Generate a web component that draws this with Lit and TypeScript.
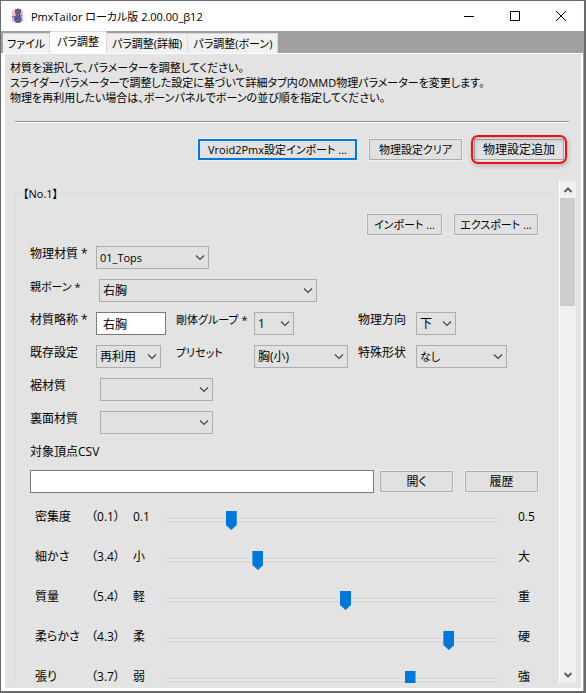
import { LitElement, html, css } from "lit";
import { customElement, property } from "lit/decorators.js";

interface SliderRow {
  id: string;
  name: string;
  value: string;
  low: string;
  high: string;
  pos: number;
}

const SLIDERS: SliderRow[] = [
  { id: "density", name: "密集度", value: "0.1", low: "0.1", high: "0.5", pos: 183 },
  { id: "fineness", name: "細かさ", value: "3.4", low: "小", high: "大", pos: 266 },
  { id: "mass", name: "質量", value: "5.4", low: "軽", high: "重", pos: 539 },
  { id: "softness", name: "柔らかさ", value: "4.3", low: "柔", high: "硬", pos: 861 },
  { id: "tension", name: "張り", value: "3.7", low: "弱", high: "強", pos: 740 },
];

@customElement("combo-box")
class ComboBox extends LitElement {
  @property() value = "";
  @property() label = "";

  static styles = css`
    :host { display: block; position: relative; height: 23px; }
    select {
      appearance: none;
      box-sizing: border-box;
      width: 100%;
      height: 23px;
      margin: 0;
      padding: 0 20px 0 3px;
      border: 1px solid #adadad;
      border-radius: 0;
      background: #e1e1e1;
      color: #000;
      font: inherit;
      font-feature-settings: inherit;
    }
    svg { position: absolute; right: 4px; top: 8px; pointer-events: none; }
  `;

  render() {
    return html`<select aria-label=${this.label}><option>${this.value}</option></select>
      <svg width="10" height="7" viewBox="0 0 10 7"><path d="M1 1.5L5 5.5L9 1.5" fill="none" stroke="#444" stroke-width="1.2"/></svg>`;
  }
}

@customElement("app-root")
class AppRoot extends LitElement {
  static styles = css`
    :host {
      display: block;
      font: 12px/15px "Open Sans", "Noto Sans CJK JP", sans-serif;
      font-feature-settings: "palt";
      color: #000;
    }
    * { box-sizing: border-box; }
    button, input { font: inherit; font-feature-settings: inherit; color: inherit; margin: 0; }
    .window {
      display: flex;
      flex-direction: column;
      height: 100vh;
      border: 1px solid #6b696b;
      border-right-width: 2px;
      border-bottom-width: 2px;
      background: #a0a0a0;
      overflow: hidden;
    }
    .titlebar {
      display: flex;
      align-items: center;
      flex: none;
      height: 30px;
      padding-left: 9px;
      background: #fff;
    }
    .title { flex: 1; margin: 0 0 0 5px; font-size: 11px; font-weight: 400; white-space: nowrap; }
    .caption { display: flex; align-items: center; justify-content: center; width: 46px; height: 28px; padding: 0; border: 0; background: none; }
    .tabs { display: flex; align-items: flex-end; flex: none; height: 22px; padding-left: 2px; }
    .tab { height: 20px; padding: 0 4px; border: 1px solid #d9d9d9; border-width: 1px 1px 0 0; background: #f0f0f0; font-size: 11px; white-space: nowrap; }
    .tab.active { height: 22px; padding: 0 7px 2px; background: #fff; }
    .tab.wide { padding: 0 5px; }
    .page {
      display: flex;
      flex-direction: column;
      flex: 1;
      min-height: 0;
      margin-right: 1px;
      padding: 0 5px 5px;
      border: solid #fff;
      border-width: 1px 2px 3px 4px;
      background: #e3e3e3;
    }
    .intro { flex: none; margin: 6px 0 0; font-size: 11px; white-space: nowrap; }
    .rule { flex: none; height: 2px; margin: 16px 7px 0 5px; border: 0; border-top: 1px solid #8e8e8e; border-bottom: 1px solid #fff; }
    .actions { display: flex; justify-content: flex-end; flex: none; gap: 12px; padding: 16px 12px 0 0; }
    .btn { height: 21px; padding: 0; border: 1px solid #adadad; outline: 1px solid #eee; background: #e1e1e1; white-space: nowrap; }
    .main-btn { width: 93px; }
    .primary { width: 159px; border: 2px solid #0078d7; }
    .marked { position: relative; width: 90px; }
    .marked::after {
      content: "";
      position: absolute;
      inset: -5px -4px;
      border: 2px solid #f01018;
      border-radius: 7px;
      box-shadow: 1px 2px 5px #0003, inset 1px 2px 5px #0003;
    }
    .scroller { display: flex; flex: 1; min-height: 0; margin-top: 21px; padding-left: 4px; }
    .view { flex: 1; min-width: 0; overflow: hidden; padding-right: 5px; }
    .group { height: 640px; margin: 5px 0 0 1px; padding: 0 14px; border: 1px solid #dcdcdc; }
    legend { padding: 0 1px; margin-left: -8px; }
    .scrollbar { display: flex; flex-direction: column; align-items: stretch; flex: none; width: 17px; border-left: 1px solid #fff; background: #f0f0f0; }
    .arrow { display: flex; align-items: center; justify-content: center; flex: none; height: 17px; padding: 0; border: 0; background: none; }
    .thumb { height: 108px; margin-right: 1px; background: #cdcdcd; }
    .space { flex: 1; }
    .row { display: flex; align-items: flex-start; height: 33px; white-space: nowrap; }
    .io { justify-content: flex-end; gap: 12px; padding: 13px 1px 0 0; height: 45px; }
    .io .import { width: 75px; }
    .io .export { width: 84px; }
    .lbl { width: 66px; flex: none; }
    .lbl.mid { width: 78px; }
    .lbl.end { width: 58px; }
    .cell { display: flex; flex: none; }
    .cell.first { width: 146px; }
    .cell.second { width: 182px; }
    .small { font-size: 11px; }
    .w40 { width: 40px; }
    .w65 { width: 65px; }
    .w91 { width: 91px; }
    .w94 { width: 94px; }
    .w113 { width: 113px; }
    .w218 { width: 218px; }
    .in3 { margin-left: 3px; }
    .in4 { margin-left: 4px; }
    .field { height: 23px; border: 1px solid #7a7a7a; border-radius: 0; background: #fff; padding: 0 6px; }
    .short { width: 70px; }
    .csv { gap: 6px; height: 34px; padding-right: 1px; }
    .csv .field { flex: 1; min-width: 0; }
    .csv .btn { width: 73px; margin-top: 1px; }
    .csv .btn + .btn { margin-left: 6px; }
    .csv-label { display: block; height: 26px; }
    .slide { display: flex; align-items: flex-start; height: 40px; padding: 0 1px 0 5px; white-space: nowrap; }
    .slide .name { width: 56px; padding-top: 5px; }
    .slide .value { width: 42px; padding-top: 5px; }
    .slide .low { width: 33px; padding-top: 5px; }
    .slide .high { width: 20px; padding-top: 5px; }
    .slide input { appearance: none; flex: 1; min-width: 0; height: 20px; margin: 6px 18px 0 0; background: none; }
    .slide input::-webkit-slider-runnable-track { height: 4px; border: 1px solid #d1d5d3; background: #e7eaea; }
    .slide input::-webkit-slider-thumb {
      appearance: none;
      width: 11px;
      height: 19px;
      margin-top: -8px;
      background: #0078d7;
      clip-path: polygon(0 0, 100% 0, 100% 74%, 50% 100%, 0 74%);
    }
  `;

  private slider(s: SliderRow) {
    return html`<div class="slide">
      <label class="name" for=${s.id}>${s.name}</label>
      <output class="value" for=${s.id}>（${s.value}）</output>
      <span class="low">${s.low}</span>
      <input id=${s.id} type="range" min="0" max="1000" .value=${String(s.pos)} />
      <span class="high">${s.high}</span>
    </div>`;
  }

  render() {
    return html`<main class="window">
      <header class="titlebar">
        <svg width="16" height="16" viewBox="0 0 16 16" aria-hidden="true">
          <path d="M2 2H13V14H2Z" fill="#f0b4e0"/>
          <path d="M5 1H7L8 0L9 1H11V5L10 7L11 9L12 12L10 15H6L4 12V9L6 7L5 5Z" fill="#66666c"/>
          <path d="M2 8.5L5 9.5L8 9L12 7.5M4 11.5L8 10.5L11 11" fill="none" stroke="#5448b8"/>
        </svg>
        <h1 class="title">PmxTailor ローカル版 2.00.00_β12</h1>
        <button class="caption" aria-label="最小化"><svg width="10" height="10"><path d="M0 5.5H10" stroke="#000"/></svg></button>
        <button class="caption" aria-label="最大化"><svg width="10" height="10"><path d="M.5 .5H9.5V9.5H.5Z" fill="none" stroke="#000"/></svg></button>
        <button class="caption" aria-label="閉じる"><svg width="10" height="10"><path d="M0 0L10 10M10 0L0 10" stroke="#000"/></svg></button>
      </header>
      <nav class="tabs" role="tablist">
        <button class="tab" role="tab">ファイル</button>
        <button class="tab active" role="tab" aria-selected="true">パラ調整</button>
        <button class="tab wide" role="tab">パラ調整(詳細)</button>
        <button class="tab wide" role="tab">パラ調整(ボーン)</button>
      </nav>
      <section class="page">
        <p class="intro">材質を選択して、パラメーターを調整してください。<br />スライダーパラメーターで調整した設定に基づいて詳細タブ内のMMD物理パラメーターを変更します。<br />物理を再利用したい場合は、ボーンパネルでボーンの並び順を指定してください。</p>
        <hr class="rule" />
        <div class="actions">
          <button class="btn primary small">Vroid2Pmx設定インポート ...</button>
          <button class="btn main-btn small">物理設定クリア</button>
          <button class="btn main-btn marked">物理設定追加</button>
        </div>
        <div class="scroller">
          <div class="view">
            <fieldset class="group">
              <legend class="small">【No.1】</legend>
              <div class="row io">
                <button class="btn import small">インポート ...</button>
                <button class="btn export small">エクスポート ...</button>
              </div>
              <div class="row"><span class="lbl">物理材質 *</span><combo-box class="w113 small" label="物理材質" value="01_Tops"></combo-box></div>
              <div class="row"><span class="lbl small">親ボーン *</span><combo-box class="w218 in3" label="親ボーン" value="右胸"></combo-box></div>
              <div class="row">
                <div class="cell first"><label class="lbl" for="abbr">材質略称 *</label><input class="field short" id="abbr" type="text" value="右胸" /></div>
                <div class="cell second"><span class="lbl mid small">剛体グループ *</span><combo-box class="w40" label="剛体グループ" value="1"></combo-box></div>
                <div class="cell"><span class="lbl end">物理方向</span><combo-box class="w40" label="物理方向" value="下"></combo-box></div>
              </div>
              <div class="row">
                <div class="cell first"><span class="lbl">既存設定</span><combo-box class="w65" label="既存設定" value="再利用"></combo-box></div>
                <div class="cell second"><span class="lbl mid small">プリセット</span><combo-box class="w94" label="プリセット" value="胸(小)"></combo-box></div>
                <div class="cell"><span class="lbl end">特殊形状</span><combo-box class="w91 small" label="特殊形状" value="なし"></combo-box></div>
              </div>
              <div class="row"><span class="lbl">裾材質</span><combo-box class="w113 in4" label="裾材質"></combo-box></div>
              <div class="row"><span class="lbl">裏面材質</span><combo-box class="w113 in4" label="裏面材質"></combo-box></div>
              <label class="csv-label" for="csv">対象頂点CSV</label>
              <div class="row csv"><input class="field" id="csv" type="text" /><button class="btn">開く</button><button class="btn">履歴</button></div>
              ${SLIDERS.map((s) => this.slider(s))}
            </fieldset>
          </div>
          <div class="scrollbar">
            <button class="arrow" aria-label="上へ"><svg width="8" height="6"><path d="M.5 5L4 1.5L7.5 5" fill="none" stroke="#606060" stroke-width="2"/></svg></button>
            <div class="thumb"></div>
            <div class="space"></div>
            <button class="arrow" aria-label="下へ"><svg width="8" height="6"><path d="M.5 1L4 4.5L7.5 1" fill="none" stroke="#606060" stroke-width="2"/></svg></button>
          </div>
        </div>
      </section>
    </main>`;
  }
}
